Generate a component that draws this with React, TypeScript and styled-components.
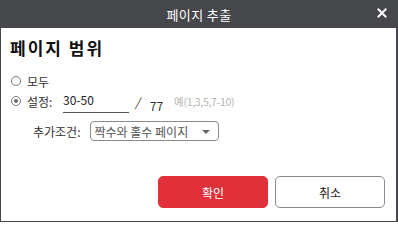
import styled, { createGlobalStyle } from "styled-components";

const GlobalStyle = createGlobalStyle`
  html, body {
    margin: 0;
    padding: 0;
    background: #ffffff;
  }
  * {
    box-sizing: border-box;
  }
`;

const FONT = `"Noto Sans CJK KR", "Noto Sans", sans-serif`;

const Dialog = styled.div`
  width: 398px;
  height: 222px;
  display: flex;
  flex-direction: column;
  font-family: ${FONT};
  color: #222222;
`;

const TitleBar = styled.div`
  height: 28px;
  flex-shrink: 0;
  background: #46474b;
  color: #ffffff;
  display: flex;
  align-items: center;
  justify-content: center;
  position: relative;
  font-size: 13px;
  letter-spacing: 0.4px;
`;

const CloseButton = styled.button`
  position: absolute;
  right: 11px;
  top: 7px;
  width: 11px;
  height: 11px;
  padding: 0;
  border: none;
  background: transparent;
  display: flex;
  align-items: center;
  justify-content: center;
  cursor: pointer;
`;

const Body = styled.div`
  flex: 1;
  border: 1px solid #46474b;
  border-top: none;
  border-right-width: 2px;
  padding: 9px 11px 0 9px;
  display: flex;
  flex-direction: column;
`;

const Heading = styled.h2`
  margin: 0;
  font-size: 17px;
  font-weight: 700;
  line-height: 22px;
  letter-spacing: 2px;
  color: #111111;
`;

const Options = styled.div`
  margin-top: 12px;
  display: flex;
  flex-direction: column;
`;

const Row = styled.div`
  height: 20px;
  display: flex;
  align-items: center;
  font-size: 12px;
`;

const Radio = styled.span<{ checked?: boolean }>`
  width: 10px;
  height: 10px;
  border-radius: 50%;
  border: 1px solid #7a7a7a;
  margin-left: 1px;
  margin-right: 6px;
  display: flex;
  align-items: center;
  justify-content: center;
  flex-shrink: 0;
  &::after {
    content: "";
    display: ${({ checked }) => (checked ? "block" : "none")};
    width: 4px;
    height: 4px;
    border-radius: 50%;
    background: #6a6a6a;
  }
`;

const Label = styled.span<{ width?: number }>`
  display: inline-block;
  width: ${({ width }) => (width ? `${width}px` : "auto")};
  color: #333333;
`;

const RangeInput = styled.input`
  width: 66px;
  height: 24px;
  padding: 0 0 2px 0;
  border: none;
  border-bottom: 1px solid #555555;
  font-family: ${FONT};
  font-size: 12px;
  color: #222222;
  outline: none;
  background: transparent;
`;

const Slash = styled.span`
  margin-left: 6px;
  font-size: 12px;
  font-style: italic;
  color: #333333;
`;

const Total = styled.span`
  margin-left: 10px;
  align-self: flex-end;
  line-height: 12px;
  margin-bottom: -1px;
  font-size: 12px;
  color: #333333;
`;

const Hint = styled.span`
  margin-left: 11px;
  font-size: 10.5px;
  color: #b4b4b4;
  letter-spacing: -0.3px;
`;

const ConditionRow = styled(Row)`
  margin-top: 10px;
  padding-left: 23px;
`;

const Select = styled.div`
  margin-left: 9px;
  width: 129px;
  height: 20px;
  border: 1px solid #8a8a8a;
  border-radius: 4px;
  padding: 0 8px 0 4px;
  display: flex;
  align-items: center;
  justify-content: space-between;
  font-size: 12px;
  color: #555555;
`;

const Caret = styled.span`
  width: 0;
  height: 0;
  border-left: 4px solid transparent;
  border-right: 4px solid transparent;
  border-top: 4px solid #666666;
  margin-top: 2px;
`;

const Footer = styled.div`
  margin-top: 35px;
  display: flex;
  justify-content: flex-end;
  gap: 7px;
`;

const Button = styled.button<{ primary?: boolean }>`
  width: 110px;
  height: 32px;
  border-radius: 5px;
  font-family: ${FONT};
  font-size: 12px;
  cursor: pointer;
  border: 1px solid ${({ primary }) => (primary ? "#e0303a" : "#8a8a8a")};
  background: ${({ primary }) => (primary ? "#e0303a" : "#ffffff")};
  color: ${({ primary }) => (primary ? "#ffffff" : "#222222")};
`;

export default function App() {
  return (
    <>
      <GlobalStyle />
      <Dialog>
        <TitleBar>
          페이지 추출
          <CloseButton aria-label="닫기">
            <svg width="10" height="10" viewBox="0 0 10 10">
              <path d="M1.5 1.5 L8.5 8.5 M8.5 1.5 L1.5 8.5" stroke="#ffffff" strokeWidth="2" strokeLinecap="square" />
            </svg>
          </CloseButton>
        </TitleBar>
        <Body>
          <Heading>페이지 범위</Heading>
          <Options>
            <Row>
              <Radio />
              <Label>모두</Label>
            </Row>
            <Row>
              <Radio checked />
              <Label width={36}>설정:</Label>
              <RangeInput defaultValue="30-50" />
              <Slash>/</Slash>
              <Total>77</Total>
              <Hint>예(1,3,5,7-10)</Hint>
            </Row>
          </Options>
          <ConditionRow>
            <Label>추가조건:</Label>
            <Select>
              짝수와 홀수 페이지
              <Caret />
            </Select>
          </ConditionRow>
          <Footer>
            <Button primary>확인</Button>
            <Button>취소</Button>
          </Footer>
        </Body>
      </Dialog>
    </>
  );
}
